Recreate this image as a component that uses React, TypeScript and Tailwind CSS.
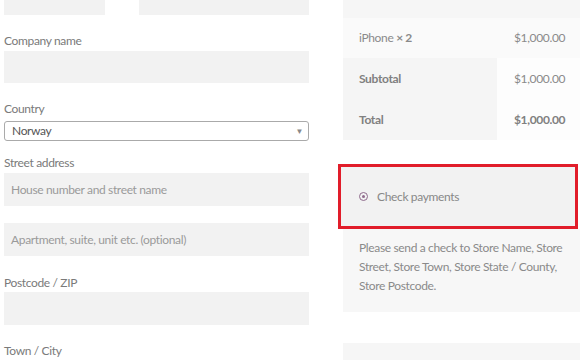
import React from 'react';

const Label = ({ text, className = '' }: { text: string; className?: string }) => (
  <div className={`h-4 text-[12px] leading-4 text-[#7a7a7a] ${className}`}>{text}</div>
);

const Field = ({ placeholder = '', className = '' }: { placeholder?: string; className?: string }) => (
  <div className={`flex items-center bg-[#f2f2f2] px-[7px] text-[12px] text-[#9a9a9a] ${className}`}>
    {placeholder}
  </div>
);

const App = () => {
  return (
    <div
      className="flex h-[360px] w-[580px] overflow-hidden bg-white pl-1 tracking-[-0.35px]"
      style={{ fontFamily: 'Lato, "Open Sans", sans-serif' }}
    >
      {/* billing form */}
      <div className="flex w-[305px] shrink-0 flex-col">
        <div className="flex h-[15px] gap-[34px]">
          <div className="w-[101px] bg-[#f2f2f2]" />
          <div className="flex-1 bg-[#f2f2f2]" />
        </div>

        <Label text="Company name" className="mt-[18px]" />
        <Field className="mt-[2px] h-[32px]" />

        <Label text="Country" className="mt-[18px]" />
        <div className="mt-1 flex h-[20px] items-center justify-between rounded-[3px] border border-[#aaa] bg-white pl-[7px] pr-[5px] text-[12px] text-[#555]">
          <span>Norway</span>
          <span className="text-[8px] text-[#888]">▼</span>
        </div>

        <Label text="Street address" className="mt-[14px]" />
        <Field placeholder="House number and street name" className="mt-[2px] h-[33px]" />
        <Field placeholder="Apartment, suite, unit etc. (optional)" className="mt-[17px] h-[33px]" />

        <Label text="Postcode / ZIP" className="mt-[19px]" />
        <Field className="mt-[1px] h-[33px]" />

        <Label text="Town / City" className="mt-[18px]" />
      </div>

      {/* order review */}
      <div className="ml-[34px] flex w-[240px] shrink-0 flex-col text-[12px]">
        <div className="h-[18px] bg-[#f6f6f6]" />
        <div className="flex h-[40px] bg-[#fafafa] text-[#8a8a8a]">
          <div className="flex w-[154px] items-center pl-4">
            <span>
              iPhone <span className="font-bold">× 2</span>
            </span>
          </div>
          <div className="flex flex-1 items-center pl-[17px]">$1,000.00</div>
        </div>
        <div className="flex h-[41px]">
          <div className="flex w-[154px] items-center bg-[#f5f5f5] pl-4 font-bold text-[#808080]">Subtotal</div>
          <div className="flex flex-1 items-center bg-[#fdfdfd] pl-[17px] text-[#8a8a8a]">$1,000.00</div>
        </div>
        <div className="flex h-[41px]">
          <div className="flex w-[154px] items-center bg-[#f5f5f5] pl-4 font-bold text-[#808080]">Total</div>
          <div className="flex flex-1 items-center bg-[#fdfdfd] pl-[17px] font-bold text-[#808080]">$1,000.00</div>
        </div>

        <div className="-ml-[5px] mt-[24px] flex h-[65px] w-[240px] items-center border-[3px] border-[#e11d2a] bg-[#f2f2f2] pl-[18px] text-[#888]">
          <span className="mr-[9px] flex h-[9px] w-[9px] items-center justify-center rounded-full border-[1.5px] border-[#8f6a8c]">
            <span className="h-[3px] w-[3px] rounded-full bg-[#8f6a8c]" />
          </span>
          Check payments
        </div>
        <div className="h-[83px] bg-[#f7f7f7] pl-4 pt-[9px] leading-[19px] text-[#8a8a8a]">
          Please send a check to Store Name, Store Street, Store Town, Store State / County, Store Postcode.
        </div>

        <div className="mt-[31px] flex-1 bg-[#f6f6f6]" />
      </div>
    </div>
  );
};

export default App;
